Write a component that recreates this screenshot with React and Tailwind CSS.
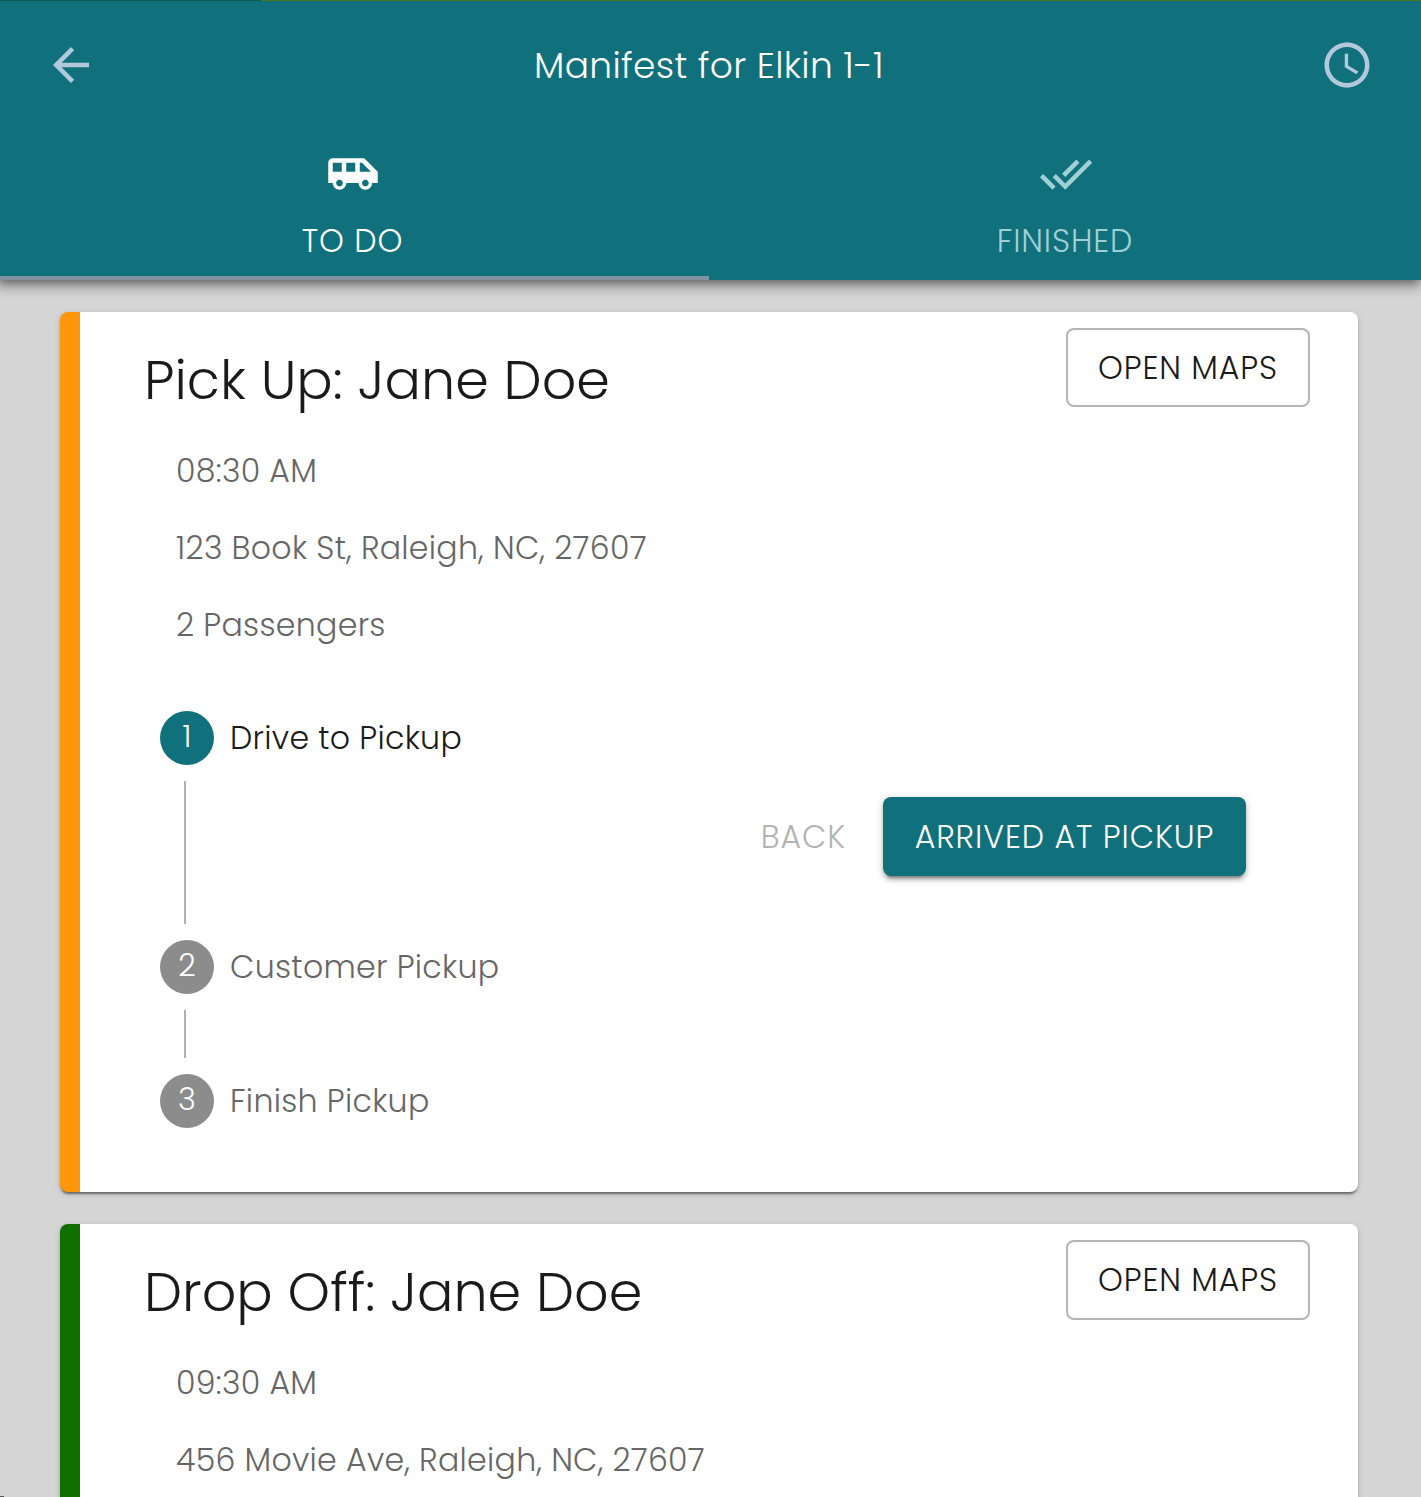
import React from "react";
import { MdAccessTime, MdAirportShuttle, MdArrowBack, MdDoneAll } from "react-icons/md";

function Header() {
  return (
    <header className="relative z-10 flex h-[280px] flex-col bg-[#10717c] text-white shadow-[0_4px_8px_-2px_rgba(0,0,0,0.36),0_8px_10px_0_rgba(0,0,0,0.2),0_2px_20px_0_rgba(0,0,0,0.14)]">
      <div className="flex h-px shrink-0">
        <div className="w-[264px] bg-[#10594f]" />
        <div className="flex-1 bg-[#4b741f]" />
      </div>
      <div className="flex h-[129px] items-center justify-between px-[47px]">
        <button aria-label="Back" className="pb-0.5">
          <MdArrowBack className="size-[54px] text-[#b3c9db]" />
        </button>
        <h1 className="text-[36px] leading-[54px] tracking-[0.32px]">Manifest for Elkin 1-1</h1>
        <button aria-label="History" className="pb-0.5">
          <MdAccessTime className="size-[54px] text-[#b3c9db]" />
        </button>
      </div>
      <nav className="grid h-[150px] grid-cols-2 text-[31.6px] leading-[48px] tracking-[0.9px]">
        <a className="flex flex-col items-center border-b-4 border-[#80919f] pt-[17px]">
          <MdAirportShuttle className="size-[54px]" />
          <span className="mt-4 pr-px">TO DO</span>
        </a>
        <a className="flex flex-col items-center pt-[17px] pl-0.5 text-[#9fd0d5]">
          <MdDoneAll className="size-[54px]" />
          <span className="mt-4 pr-0.5">FINISHED</span>
        </a>
      </nav>
    </header>
  );
}

function StopCard({ title, details, accent, mapsHeight, children }) {
  return (
    <section
      className={`rounded-lg border-l-[20px] bg-white pb-16 shadow-[0_4px_2px_-2px_rgba(0,0,0,0.28),0_2px_2px_0_rgba(0,0,0,0.2),0_2px_6px_0_rgba(0,0,0,0.16)] ${accent}`}
    >
      <div className="flex h-[104px] items-start justify-between pt-4 pr-12 pl-16">
        <h2 className="mt-4 text-[54px] leading-[72px]">{title}</h2>
        <button
          className={`w-[244px] rounded-lg border-2 border-[#b5b5b5] pt-0.5 text-[31.6px] tracking-[0.9px] ${mapsHeight}`}
        >
          OPEN MAPS
        </button>
      </div>
      <div className="mt-[17px] pl-24 text-[31.6px] leading-[77px] tracking-[0.29px] text-[#666]">
        {details.map((line) => (
          <p key={line}>{line}</p>
        ))}
      </div>
      {children}
    </section>
  );
}

function Step({ number, label, active }) {
  return (
    <div className="flex h-[54px] items-center gap-4">
      <div
        className={`flex size-[54px] items-center justify-center rounded-full pb-px text-[30.5px] leading-none text-white ${
          active ? "bg-[#10717c]" : "bg-[#8c8c8c]"
        }`}
      >
        {number}
      </div>
      <span className={`text-[31.6px] leading-[48px] tracking-[0.29px] ${active ? "" : "text-[#666]"}`}>{label}</span>
    </div>
  );
}

export default function App() {
  return (
    <div className="relative h-[1497px] w-[1421px] overflow-hidden bg-[#d5d5d5] font-['Poppins','Inter',sans-serif] font-light text-[#1a1a1a]">
      <div className="-ml-[3px] w-[1424px]">
        <Header />
        <main className="flex flex-col gap-8 px-[63px] pt-8">
          <StopCard
            title="Pick Up: Jane Doe"
            details={["08:30 AM", "123 Book St, Raleigh, NC, 27607", "2 Passengers"]}
            accent="border-[#ff960c]"
            mapsHeight="h-[79px]"
          >
            <div className="mt-[47px] pr-28 pl-20">
              <Step number={1} label="Drive to Pickup" active />
              <div className="my-4 ml-6 flex h-[143px] items-start justify-end border-l-2 border-[#b0b0b0] pt-4 text-[31.6px] tracking-[0.9px]">
                <button className="mr-[37px] h-[79px] pt-0.5 text-[#b3b3b3]">BACK</button>
                <button className="h-[79px] w-[363px] rounded-lg bg-[#10717c] pt-0.5 text-white shadow-[0_6px_2px_-4px_rgba(0,0,0,0.26),0_4px_4px_0_rgba(0,0,0,0.2),0_2px_10px_0_rgba(0,0,0,0.16)]">
                  ARRIVED AT PICKUP
                </button>
              </div>
              <Step number={2} label="Customer Pickup" />
              <div className="my-4 ml-6 h-12 border-l-2 border-[#b0b0b0]" />
              <Step number={3} label="Finish Pickup" />
            </div>
          </StopCard>
          <StopCard
            title="Drop Off: Jane Doe"
            details={["09:30 AM", "456 Movie Ave, Raleigh, NC, 27607"]}
            accent="border-[#0f7000]"
            mapsHeight="h-20"
          />
        </main>
      </div>
      <div className="absolute bottom-0 left-0 h-px w-1 bg-[#555]" />
    </div>
  );
}
